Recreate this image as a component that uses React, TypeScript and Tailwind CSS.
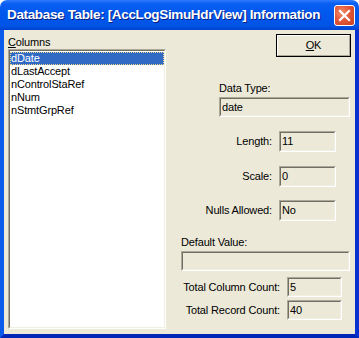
import React from 'react';

const columns = ['dDate', 'dLastAccept', 'nControlStaRef', 'nNum', 'nStmtGrpRef'];

// sunken read-only edit box, xp classic style
const Box = ({ value, className }: { value?: string; className: string }) => (
  <div className={`h-[20px] border border-t-[#ACA899] border-l-[#ACA899] border-b-white border-r-white ${className}`}>
    <div className="flex h-full items-center border border-t-[#716F64] border-l-[#716F64] border-b-[#F1EFE2] border-r-[#F1EFE2] pl-[1px] leading-[13px] text-black">
      {value}
    </div>
  </div>
);

const Row = ({ label, value, labelW, boxW }: { label: string; value: string; labelW: string; boxW: string }) => (
  <div className="flex items-center">
    <div className={`${labelW} pr-[7px] text-right leading-[13px]`}>{label}</div>
    <Box value={value} className={boxW} />
  </div>
);

const App: React.FC = () => {
  return (
    <div className="flex h-[338px] w-[359px] flex-col font-['Liberation_Sans',Arial,sans-serif] text-[11px] tracking-[-0.15px] text-black">
      {/* Title bar */}
      <div className="flex h-[30px] items-center justify-between rounded-t-[7px] bg-[linear-gradient(to_bottom,#2E7BFF_0%,#0A5FF2_12%,#0058EE_45%,#0054E6_85%,#0043CF_100%)] pl-[7px] pr-[4px]">
        <span className="text-[13.5px] font-bold tracking-[-0.35px] text-white [text-shadow:1px_1px_0_#0A1F80]">
          Database Table: [AccLogSimuHdrView] Information
        </span>
        <div className="flex h-[21px] w-[21px] items-center justify-center rounded-[3px] border border-white bg-[radial-gradient(circle_at_35%_35%,#F09070_0%,#E2583A_45%,#C8401E_100%)]">
          <svg width="13" height="13" viewBox="0 0 13 13">
            <path d="M2 2 L11 11 M11 2 L2 11" stroke="white" strokeWidth="2.2" strokeLinecap="square" />
          </svg>
        </div>
      </div>

      {/* Window frame + client */}
      <div className="flex flex-1 border-b-4 border-l-4 border-r-4 border-b-[#0026B8] border-l-[#0A5AEB] border-r-[#0831D0]">
        <div className="flex flex-1 bg-[#ECE9D8]">
          {/* Columns list */}
          <div className="flex w-[172px] flex-col pb-[5px] pl-[4px] pt-[6px]">
            <div className="h-[13px] leading-[13px]">
              <span className="underline">C</span>olumns
            </div>
            <div className="flex-1 w-[158px] border border-t-[#ACA899] border-l-[#ACA899] border-b-white border-r-white">
              <div className="h-full border border-t-[#716F64] border-l-[#716F64] border-b-[#F1EFE2] border-r-[#F1EFE2] bg-white pt-[1px]">
                {columns.map((c, i) => (
                  <div
                    key={c}
                    className={
                      i === 0
                        ? 'h-[13px] border border-dotted border-[#E9D68C] bg-[#316AC5] leading-[11px] text-white'
                        : 'h-[13px] pl-[1px] leading-[13px]'
                    }
                  >
                    {c}
                  </div>
                ))}
              </div>
            </div>
          </div>

          {/* Details */}
          <div className="flex flex-1 flex-col pt-[4px]">
            <div className="ml-[100px] flex h-[23px] w-[75px] border border-black">
              <div className="flex flex-1 items-center justify-center border border-b-[#ACA899] border-l-white border-r-[#ACA899] border-t-white">
                <span>
                  <span className="underline">O</span>K
                </span>
              </div>
            </div>

            <div className="ml-[43px] mt-[25px] leading-[13px]">Data Type:</div>
            <Box value="date" className="ml-[43px] mt-[2px] w-[131px]" />

            <div className="mt-[14px]">
              <Row label="Length:" value="11" labelW="w-[103px]" boxW="w-[57px] h-[21px]" />
            </div>
            <div className="mt-[14px]">
              <Row label="Scale:" value="0" labelW="w-[103px]" boxW="w-[57px] h-[21px]" />
            </div>
            <div className="mt-[13px]">
              <Row label="Nulls Allowed:" value="No" labelW="w-[103px]" boxW="w-[57px] h-[21px]" />
            </div>

            <div className="ml-[5px] mt-[15px] leading-[13px]">Default Value:</div>
            <Box className="ml-[5px] mt-[2px] w-[169px]" />

            <div className="mt-[6px]">
              <Row label="Total Column Count:" value="5" labelW="w-[111px]" boxW="w-[55px]" />
            </div>
            <div className="mt-[3px]">
              <Row label="Total Record Count:" value="40" labelW="w-[111px]" boxW="w-[55px]" />
            </div>
          </div>
        </div>
      </div>
    </div>
  );
};

export default App;
